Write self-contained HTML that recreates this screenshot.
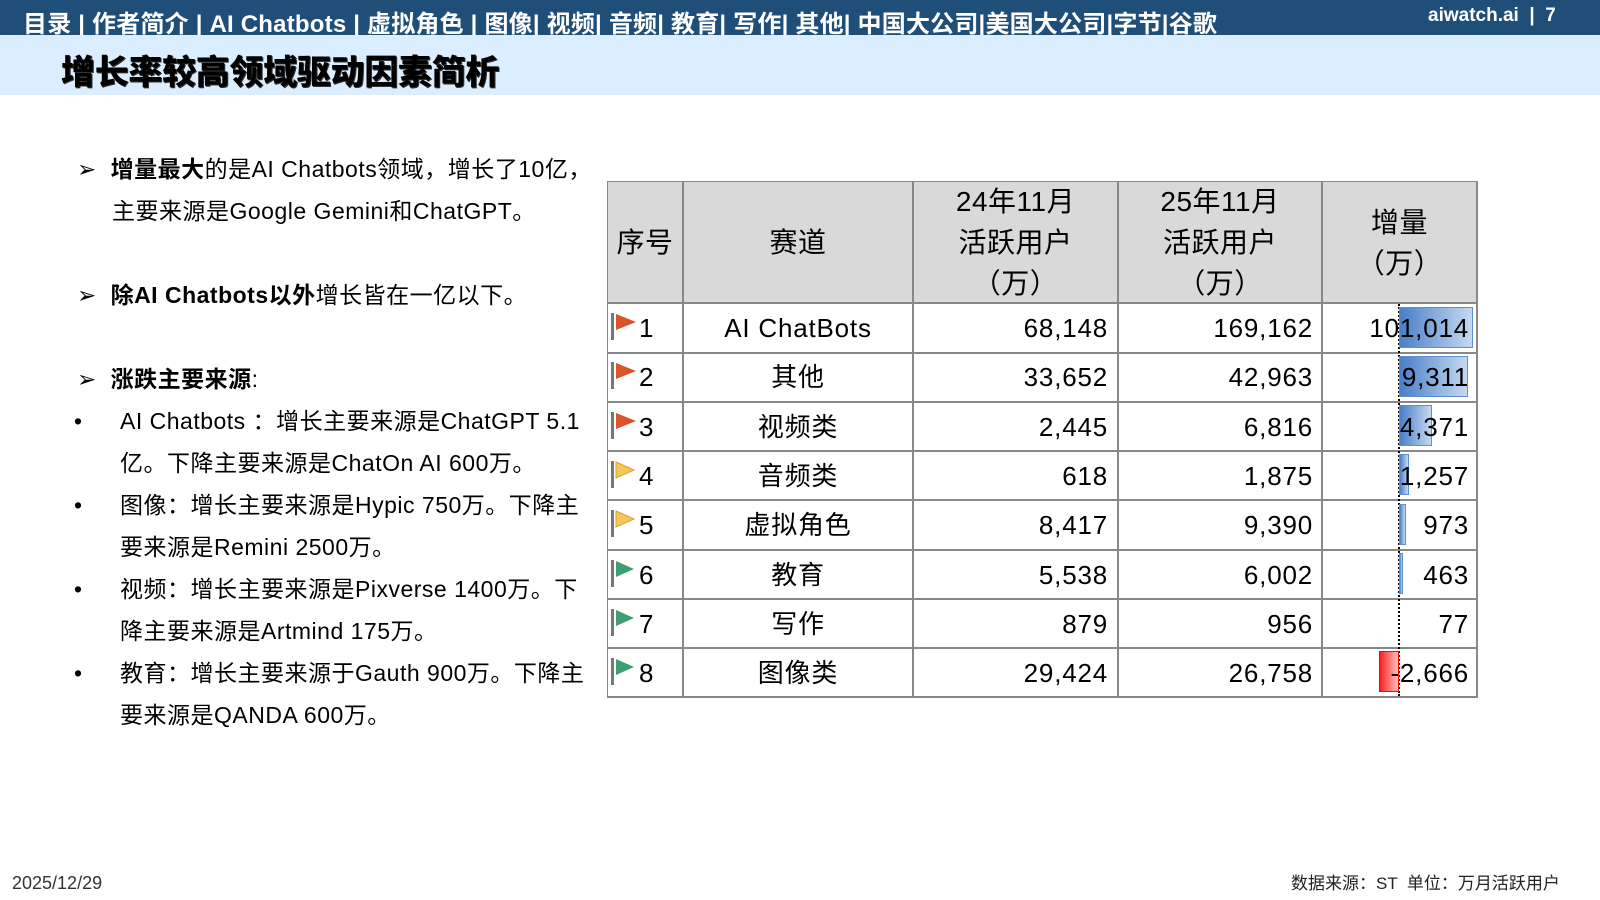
<!DOCTYPE html>
<html><head><meta charset="utf-8"><style>
body{margin:0;width:1600px;height:900px;position:relative;overflow:hidden;background:#fff;font-family:"Liberation Sans","Noto Sans CJK SC",sans-serif;color:#000}
.nav{position:absolute;left:0;top:0;width:1600px;height:35px;background:#1f4e79;color:#fff}
.nav .l{position:absolute;left:23px;top:4px;font-size:24px;font-weight:bold;white-space:nowrap;letter-spacing:0.2px}
.nav .r{position:absolute;left:1428px;top:5px;font-size:19px;font-weight:bold}
.band{position:absolute;left:0;top:35px;width:1600px;height:60px;background:#dbeeff}
.band div{position:absolute;left:61px;top:10px;font-size:34px;font-weight:900;letter-spacing:-0.3px;text-shadow:1px 1px 0 #333}
.t{position:absolute;font-size:23px;white-space:nowrap;line-height:42px;letter-spacing:0.5px}
.tb{position:absolute;left:607px;top:181px;width:870px;height:517px;border:1px solid #888;box-sizing:border-box}
.h{position:absolute;top:181px;height:122px;background:#d9d9d9}
.vl{position:absolute;top:181px;height:517px;width:2px;background:#888}
.hl{position:absolute;left:607px;width:870px;height:2px;background:#888}
.c{position:absolute;font-size:26px;line-height:49px;white-space:nowrap;letter-spacing:0.8px}
.hd{position:absolute;font-size:28px;line-height:41px;text-align:center;letter-spacing:0.5px}
.bar{position:absolute;height:41px;background:linear-gradient(90deg,#4a7fc8,#c5d9f1);border:1px solid #5b8fd6;box-sizing:border-box}
.flag{position:absolute;width:3px;height:27px;background:#777}
</style></head><body>
<div class="nav"><div class="l">目录 | 作者简介 | AI Chatbots | 虚拟角色 | 图像| 视频| 音频| 教育| 写作| 其他| 中国大公司|美国大公司|字节|谷歌</div><div class="r">aiwatch.ai &nbsp;|&nbsp; 7</div></div>
<div class="band"><div>增长率较高领域驱动因素简析</div></div>

<div class="t" style="left:77px;top:148px">➢&nbsp;&nbsp;<b>增量最大</b>的是AI Chatbots领域，增长了10亿，</div>
<div class="t" style="left:112px;top:190px">主要来源是Google Gemini和ChatGPT。</div>
<div class="t" style="left:77px;top:274px">➢&nbsp;&nbsp;<b>除AI Chatbots以外</b>增长皆在一亿以下。</div>
<div class="t" style="left:77px;top:358px">➢&nbsp;&nbsp;<b>涨跌主要来源</b>:</div>
<div class="t" style="left:74px;top:400px">•</div><div class="t" style="left:120px;top:400px">AI Chatbots ：增长主要来源是ChatGPT 5.1</div>
<div class="t" style="left:120px;top:442px">亿。下降主要来源是ChatOn AI 600万。</div>
<div class="t" style="left:74px;top:484px">•</div><div class="t" style="left:120px;top:484px">图像：增长主要来源是Hypic 750万。下降主</div>
<div class="t" style="left:120px;top:526px">要来源是Remini 2500万。</div>
<div class="t" style="left:74px;top:568px">•</div><div class="t" style="left:120px;top:568px">视频：增长主要来源是Pixverse 1400万。下</div>
<div class="t" style="left:120px;top:610px">降主要来源是Artmind 175万。</div>
<div class="t" style="left:74px;top:652px">•</div><div class="t" style="left:120px;top:652px">教育：增长主要来源于Gauth 900万。下降主</div>
<div class="t" style="left:120px;top:694px">要来源是QANDA 600万。</div>

<div class="h" style="left:607px;width:870px"></div>
<div class="tb"></div>
<div class="vl" style="left:682px"></div><div class="vl" style="left:912px"></div><div class="vl" style="left:1117px"></div><div class="vl" style="left:1321px"></div><div class="vl" style="left:1476px"></div>
<div class="hl" style="top:302px"></div><div class="hl" style="top:352px"></div><div class="hl" style="top:401px"></div><div class="hl" style="top:450px"></div><div class="hl" style="top:499px"></div><div class="hl" style="top:549px"></div><div class="hl" style="top:598px"></div><div class="hl" style="top:647px"></div><div class="hl" style="top:696px"></div>

<div class="hd" style="left:607px;width:76px;top:222px">序号</div>
<div class="hd" style="left:683px;width:230px;top:222px">赛道</div>
<div class="hd" style="left:913px;width:205px;top:181px">24年11月<br>活跃用户<br>（万）</div>
<div class="hd" style="left:1118px;width:204px;top:181px">25年11月<br>活跃用户<br>（万）</div>
<div class="hd" style="left:1322px;width:155px;top:202px">增量<br>（万）</div>

<div style="position:absolute;left:1398px;top:304px;height:392px;border-left:2px dotted #000"></div>
<div class="bar" style="left:1399px;top:307px;width:74px"></div>
<div class="bar" style="left:1399px;top:356px;width:69px"></div>
<div class="bar" style="left:1399px;top:405px;width:33px"></div>
<div class="bar" style="left:1399px;top:454px;width:10px"></div>
<div class="bar" style="left:1399px;top:504px;width:7px"></div>
<div class="bar" style="left:1399px;top:553px;width:4px"></div>
<div class="bar" style="left:1379px;top:651px;width:20px;background:linear-gradient(90deg,#ff2020,#ffc0c0);border-color:#f00"></div>

<svg width="1600" height="900" style="position:absolute;left:0;top:0">
<g fill="#d9542a"><path d="M616 314l20 8-20 8z"/><path d="M616 363l20 8-20 8z"/><path d="M616 413l20 8-20 8z"/></g>
<g fill="#f7c75c" stroke="#e0a020" stroke-width="1"><path d="M616 462l18 8-18 8z"/><path d="M616 511l18 8-18 8z"/></g>
<g fill="#3f9d74"><path d="M616 561l18 8-18 8z"/><path d="M616 610l18 8-18 8z"/><path d="M616 659l18 8-18 8z"/></g>
</svg>
<div class="flag" style="left:611px;top:313px"></div><div class="flag" style="left:611px;top:362px"></div><div class="flag" style="left:611px;top:412px"></div><div class="flag" style="left:611px;top:461px"></div><div class="flag" style="left:611px;top:510px"></div><div class="flag" style="left:611px;top:560px"></div><div class="flag" style="left:611px;top:609px"></div><div class="flag" style="left:611px;top:658px"></div>

<div class="c" style="left:639px;top:304px">1</div><div class="c" style="left:639px;top:353px">2</div><div class="c" style="left:639px;top:403px">3</div><div class="c" style="left:639px;top:452px">4</div><div class="c" style="left:639px;top:501px">5</div><div class="c" style="left:639px;top:551px">6</div><div class="c" style="left:639px;top:600px">7</div><div class="c" style="left:639px;top:649px">8</div>

<div class="c" style="left:683px;width:230px;text-align:center;top:304px">AI ChatBots</div>
<div class="c" style="left:683px;width:230px;text-align:center;top:353px">其他</div>
<div class="c" style="left:683px;width:230px;text-align:center;top:403px">视频类</div>
<div class="c" style="left:683px;width:230px;text-align:center;top:452px">音频类</div>
<div class="c" style="left:683px;width:230px;text-align:center;top:501px">虚拟角色</div>
<div class="c" style="left:683px;width:230px;text-align:center;top:551px">教育</div>
<div class="c" style="left:683px;width:230px;text-align:center;top:600px">写作</div>
<div class="c" style="left:683px;width:230px;text-align:center;top:649px">图像类</div>

<div class="c" style="right:492px;top:304px">68,148</div><div class="c" style="right:492px;top:353px">33,652</div><div class="c" style="right:492px;top:403px">2,445</div><div class="c" style="right:492px;top:452px">618</div><div class="c" style="right:492px;top:501px">8,417</div><div class="c" style="right:492px;top:551px">5,538</div><div class="c" style="right:492px;top:600px">879</div><div class="c" style="right:492px;top:649px">29,424</div>

<div class="c" style="right:287px;top:304px">169,162</div><div class="c" style="right:287px;top:353px">42,963</div><div class="c" style="right:287px;top:403px">6,816</div><div class="c" style="right:287px;top:452px">1,875</div><div class="c" style="right:287px;top:501px">9,390</div><div class="c" style="right:287px;top:551px">6,002</div><div class="c" style="right:287px;top:600px">956</div><div class="c" style="right:287px;top:649px">26,758</div>

<div class="c" style="right:131px;top:304px">101,014</div><div class="c" style="right:131px;top:353px">9,311</div><div class="c" style="right:131px;top:403px">4,371</div><div class="c" style="right:131px;top:452px">1,257</div><div class="c" style="right:131px;top:501px">973</div><div class="c" style="right:131px;top:551px">463</div><div class="c" style="right:131px;top:600px">77</div><div class="c" style="right:131px;top:649px">-2,666</div>

<div class="t" style="left:12px;top:871px;font-size:18px;color:#333;line-height:24px;letter-spacing:0">2025/12/29</div>
<div class="t" style="left:1291px;top:872px;font-size:17px;color:#222;line-height:24px;letter-spacing:0">数据来源：ST &nbsp;单位：万月活跃用户</div>
</body></html>
